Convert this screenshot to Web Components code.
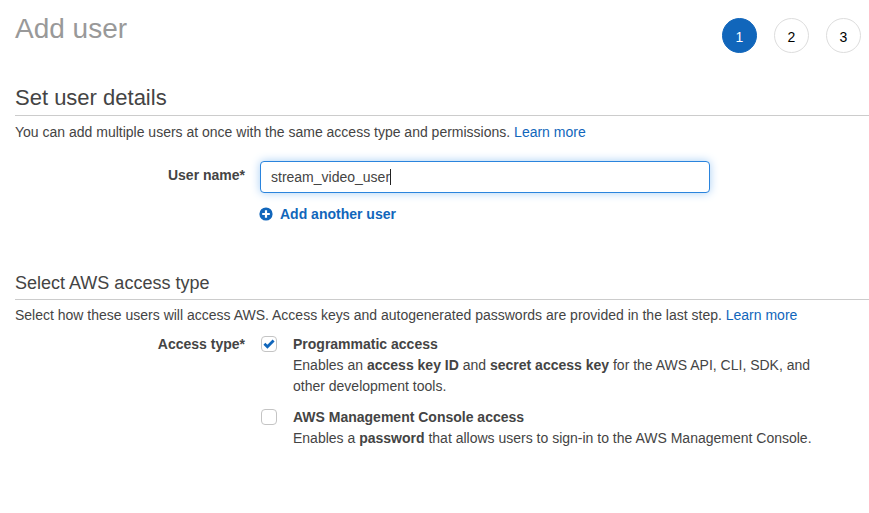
<!DOCTYPE html>
<html lang="en">
<head>
<meta charset="utf-8">
<title>Add user</title>
<style>
body { margin: 0; background: #fff; color: #444; font: 14px/21px "Liberation Sans", Arial, sans-serif; }
</style>
</head>
<body>
<add-user-page></add-user-page>
<script>
const define = (name, html, setup) => customElements.define(name, class extends HTMLElement {
  constructor() {
    super();
    this.attachShadow({ mode: "open" }).innerHTML = html;
  }
  connectedCallback() { if (setup) setup(this, this.shadowRoot); }
});

define("wizard-steps", `
<style>
:host { display: block; }
ol { display: flex; gap: 17px; margin: 0; padding: 0; list-style: none; }
button { box-sizing: border-box; display: flex; align-items: center; justify-content: center; width: 35px; height: 35px; padding: 3px 0 0; border: 1px solid #ddd; border-radius: 50%; background: #fff; color: #000; font: 14px/21px "Liberation Sans", Arial, sans-serif; }
button[aria-current] { background: #1166bb; border-color: #1166bb; color: #fff; }
</style>
<ol><li><button type="button" aria-current="step">1</button></li><li><button type="button">2</button></li><li><button type="button">3</button></li></ol>`);

define("form-section", `
<style>
:host { display: block; }
h2 { margin: 0; padding-bottom: 4px; border-bottom: 1px solid #ccc; font-weight: 400; font-size: 18px; line-height: 24px; }
:host([size="large"]) h2 { padding-bottom: 3px; font-size: 22px; line-height: 28px; }
.intro { margin-top: 5px; }
:host([size="large"]) .intro { margin-top: 6px; }
</style>
<h2><slot name="heading"></slot></h2>
<div class="intro"><slot name="intro"></slot></div>
<slot></slot>`);

define("user-name-field", `
<style>
:host { display: grid; grid-template-columns: 245px minmax(0, 450px); column-gap: 15px; margin-left: -15px; padding-top: 18px; }
label { text-align: right; font-weight: 700; padding-top: 4px; }
input { box-sizing: border-box; display: block; width: 100%; height: 32px; padding: 0 10px; border: 1px solid #2a84dd; border-radius: 4px; outline: 0; box-shadow: 0 0 10px #a8cff5; color: #444; background: #fff; font: 14px/21px "Liberation Sans", Arial, sans-serif; }
.box { position: relative; }
.caret { position: absolute; top: 8px; width: 1px; height: 16px; background: #222; pointer-events: none; }
button { grid-column: 2; justify-self: start; display: flex; align-items: center; gap: 7px; margin: 11px 0 0 -1px; padding: 0; border: 0; background: none; color: #1166bb; font: 700 14px/21px "Liberation Sans", Arial, sans-serif; }
svg { display: block; width: 14px; height: 14px; margin-bottom: 2px; }
</style>
<label for="name">User name*</label>
<div class="box"><input id="name" type="text" value="stream_video_user"><div class="caret" aria-hidden="true"></div></div>
<button type="button"><svg viewBox="0 0 14 14" aria-hidden="true"><circle cx="7" cy="7" r="6.6" fill="#1166bb"/><path d="M7 3.2V10.8M3.2 7H10.8" stroke="#fff" stroke-width="2.2"/></svg>Add another user</button>`,
(host, root) => {
  // The caret sits just after the last character of the value.
  const input = root.querySelector("input");
  const pen = document.createElement("canvas").getContext("2d");
  pen.font = '14px "Liberation Sans", Arial, sans-serif';
  root.querySelector(".caret").style.left = 11 + Math.round(pen.measureText(input.value).width) + "px";
});

define("access-option", `
<style>
:host { display: grid; grid-template-columns: 16px minmax(0, 530px); column-gap: 16px; }
input { appearance: none; box-sizing: border-box; width: 16px; height: 16px; margin: 2px 0 0; border: 1px solid #c4c4c4; border-radius: 4px; background: #fff; grid-area: 1 / 1; }
svg { grid-area: 1 / 1; width: 16px; height: 16px; margin-top: 2px; pointer-events: none; display: none; position: relative; }
input:checked + svg { display: block; }
.text { grid-column: 2; }
label { font-weight: 700; display: block; }
</style>
<input id="option" type="checkbox">
<svg viewBox="0 0 16 16" aria-hidden="true"><path d="M3.4 7.8L6.4 10.7L12.6 4.4" fill="none" stroke="#1166bb" stroke-width="2.8"/></svg>
<div class="text"><label for="option"><slot name="label"></slot></label><slot></slot></div>`,
(host, root) => { root.querySelector("input").checked = host.hasAttribute("checked"); });

define("access-type-field", `
<style>
:host { display: block; }
fieldset { display: grid; grid-template-columns: 230px minmax(0, 1fr); column-gap: 16px; margin: 0; padding: 8px 0 0; border: 0; min-width: 0; }
.name { text-align: right; font-weight: 700; }
.options { display: grid; gap: 10px; }
</style>
<fieldset aria-labelledby="name"><div class="name" id="name">Access type*</div><div class="options"><slot></slot></div></fieldset>`);

define("add-user-page", `
<style>
:host { display: block; padding: 13px 0 24px 15px; }
header { display: flex; justify-content: space-between; align-items: flex-start; padding-right: 8px; }
h1 { margin: 0; font-weight: 400; font-size: 28px; line-height: 32px; color: #999; }
wizard-steps { margin-top: 5px; }
a { color: #1166bb; text-decoration: none; }
.details { margin-top: 31px; }
.access { margin-top: 46px; }
</style>
<header><h1>Add user</h1><wizard-steps></wizard-steps></header>
<main>
<form-section class="details" size="large"><span slot="heading">Set user details</span><span slot="intro">You can add multiple users at once with the same access type and permissions. <a href="#details">Learn more</a></span><user-name-field></user-name-field></form-section>
<form-section class="access"><span slot="heading">Select AWS access type</span><span slot="intro">Select how these users will access AWS. Access keys and autogenerated passwords are provided in the last step. <a href="#access">Learn more</a></span>
<access-type-field>
<access-option checked><span slot="label">Programmatic access</span><span>Enables an <b>access key ID</b> and <b>secret access key</b> for the AWS API, CLI, SDK, and other development tools.</span></access-option>
<access-option><span slot="label">AWS Management Console access</span><span>Enables a <b>password</b> that allows users to sign-in to the AWS Management Console.</span></access-option>
</access-type-field></form-section>
</main>`);
</script>
</body>
</html>
